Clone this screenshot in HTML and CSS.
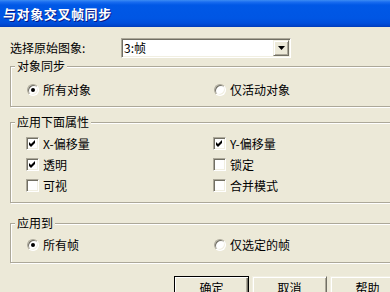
FILE: index.html
```html
<!DOCTYPE html>
<html lang="zh">
<head>
<meta charset="utf-8">
<title>与对象交叉帧同步</title>
<link rel="stylesheet" href="styles.css">
</head>
<body>
<div class="dialog">
  <div class="titlebar"><span class="title">与对象交叉帧同步</span></div>
  <div class="content">
    <div class="source-row">
      <span class="source-label">选择原始图象:</span>
      <div class="combo">
        <span class="combo-value">3:帧</span>
        <span class="combo-btn"><svg width="7" height="4" viewBox="0 0 7 4"><path d="M0 0h7L3.5 4z" fill="#000"/></svg></span>
      </div>
    </div>

    <div class="group g1">
      <span class="group-title">对象同步</span>
      <div class="opts">
        <div class="opt"><span class="ind"><span class="radio checked"></span></span><span>所有对象</span></div>
        <div class="opt"><span class="ind"><span class="radio"></span></span><span>仅活动对象</span></div>
      </div>
    </div>

    <div class="group g2">
      <span class="group-title">应用下面属性</span>
      <div class="opts">
        <div class="opt"><span class="ind"><span class="check"><svg width="7" height="7" viewBox="0 0 7 7"><polygon points="0,2 2,4 6,0 6,3 2,7 0,5" fill="#000"/></svg></span></span><span>X-偏移量</span></div>
        <div class="opt"><span class="ind"><span class="check"><svg width="7" height="7" viewBox="0 0 7 7"><polygon points="0,2 2,4 6,0 6,3 2,7 0,5" fill="#000"/></svg></span></span><span>Y-偏移量</span></div>
        <div class="opt"><span class="ind"><span class="check"><svg width="7" height="7" viewBox="0 0 7 7"><polygon points="0,2 2,4 6,0 6,3 2,7 0,5" fill="#000"/></svg></span></span><span>透明</span></div>
        <div class="opt"><span class="ind"><span class="check"></span></span><span>锁定</span></div>
        <div class="opt"><span class="ind"><span class="check"></span></span><span>可视</span></div>
        <div class="opt"><span class="ind"><span class="check"></span></span><span>合并模式</span></div>
      </div>
    </div>

    <div class="group g3">
      <span class="group-title">应用到</span>
      <div class="opts">
        <div class="opt"><span class="ind"><span class="radio checked"></span></span><span>所有帧</span></div>
        <div class="opt"><span class="ind"><span class="radio"></span></span><span>仅选定的帧</span></div>
      </div>
    </div>

    <div class="buttons">
      <button class="btn default">确定</button>
      <button class="btn">取消</button>
      <button class="btn">帮助</button>
    </div>
  </div>
</div>
</body>
</html>
```

FILE: styles.css
```css
html, body {
  margin: 0;
  padding: 0;
}
body {
  width: 390px;
  height: 292px;
  overflow: hidden;
  background: #ECE9D8;
  color: #000;
  font-family: "SimSun", "Noto Sans CJK SC", sans-serif;
  font-size: 12px;
  line-height: 14px;
}
.dialog {
  width: 440px;
}
.titlebar {
  height: 27px;
  box-sizing: border-box;
  padding-left: 3px;
  display: flex;
  align-items: center;
  background: linear-gradient(to bottom, #3C8CF3 0px, #1A6DF0 2px, #0058E6 5px, #0056E4 18px, #004FDC 23px, #0043C8 26px, #003AB6 27px);
}
.title {
  color: #fff;
  font-weight: bold;
  font-size: 13px;
  letter-spacing: 0.6px;
  text-shadow: 1px 1px 0 #0A1883;
}
.content {
  padding-left: 10px;
}
.source-row {
  display: flex;
  align-items: center;
  margin-top: 11px;
  height: 20px;
}
.source-label {
  width: 111px;
}
.combo {
  width: 170px;
  height: 20px;
  box-sizing: border-box;
  padding: 1px;
  background: #fff;
  border: 1px solid;
  border-color: #ACA899 #fff #fff #ACA899;
  box-shadow: inset 1px 1px 0 #716F64, inset -1px -1px 0 #F1EFE2;
  display: flex;
  align-items: center;
  justify-content: space-between;
}
.combo-value {
  padding-left: 1px;
}
.combo-btn {
  width: 16px;
  height: 16px;
  box-sizing: border-box;
  background: #ECE9D8;
  border: 1px solid;
  border-color: #F1EFE2 #716F64 #716F64 #F1EFE2;
  box-shadow: inset 1px 1px 0 #fff, inset -1px -1px 0 #ACA899;
  display: flex;
  align-items: center;
  justify-content: center;
}
.group {
  position: relative;
  border: 1px solid #ACA899;
  box-shadow: inset 1px 1px 0 #fff, 1px 1px 0 #fff;
}
.group-title {
  position: absolute;
  left: 4px;
  top: -8px;
  padding: 0 2px;
  background: #ECE9D8;
  line-height: 14px;
}
.g1 {
  margin-top: 8px;
  padding: 12px 15px 6px;
}
.g2 {
  margin-top: 15px;
  padding: 10px 15px 6px;
}
.g3 {
  margin-top: 20px;
  padding: 10px 15px 7px;
}
.opts {
  display: grid;
  grid-template-columns: 187px 1fr;
  grid-auto-rows: 21px;
}
.opt {
  display: flex;
  align-items: center;
  gap: 4px;
}
.ind {
  width: 13px;
  height: 13px;
  display: flex;
  align-items: center;
  justify-content: center;
}
.radio {
  position: relative;
  width: 12px;
  height: 12px;
  box-sizing: border-box;
  border-radius: 50%;
  background: #fff;
  border: 1px solid;
  border-color: #ACA899 #fff #fff #ACA899;
  box-shadow: inset 1px 1px 0 #716F64, inset -1px -1px 0 #F1EFE2;
}
.radio.checked::after {
  content: "";
  position: absolute;
  left: 3px;
  top: 3px;
  width: 4px;
  height: 4px;
  border-radius: 50%;
  background: #000;
}
.check {
  width: 13px;
  height: 13px;
  box-sizing: border-box;
  background: #fff;
  border: 1px solid;
  border-color: #ACA899 #fff #fff #ACA899;
  box-shadow: inset 1px 1px 0 #716F64, inset -1px -1px 0 #F1EFE2;
  display: flex;
  align-items: center;
  justify-content: center;
}
.buttons {
  display: flex;
  gap: 3px;
  margin-top: 13px;
  margin-left: 164px;
}
.btn {
  width: 75px;
  height: 23px;
  padding: 0;
  margin: 0;
  font: inherit;
  color: #000;
  background: #ECE9D8;
  border: 1px solid;
  border-color: #F1EFE2 #716F64 #716F64 #F1EFE2;
  box-shadow: inset 1px 1px 0 #fff, inset -1px -1px 0 #ACA899;
}
.btn.default {
  border-color: #000;
  box-shadow: inset 1px 1px 0 #fff, inset -1px -1px 0 #716F64, inset -2px -2px 0 #ACA899;
}
```
